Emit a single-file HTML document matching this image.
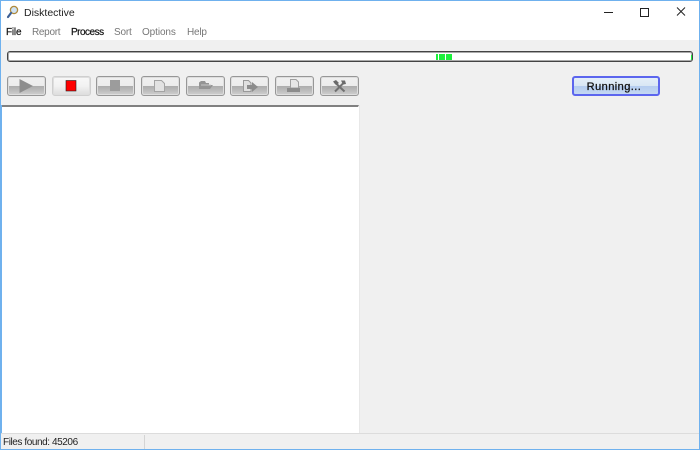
<!DOCTYPE html>
<html><head><meta charset="utf-8"><style>
html,body{margin:0;padding:0}
body{width:700px;height:450px;position:relative;overflow:hidden;background:#f0f0f0;font-family:"Liberation Sans",sans-serif;font-size:10px;color:#111}
.a{position:absolute}
.t{position:absolute;white-space:nowrap;line-height:12px;filter:blur(.25px)}
.b{position:absolute;top:76px;height:18px;width:37px;border:1px solid #979797;border-radius:3px;background:linear-gradient(#f0f0f0 0,#ececec 50%,#adadad 51%,#bcbcbc 75%,#d0d0d0 100%);box-shadow:0 0 0 1px #dedede inset;filter:blur(.3px)}
svg{position:absolute;left:0;top:0}
</style></head><body>
<div class="a" style="left:0;top:0;width:700px;height:40px;background:#fff"></div>
<div class="t" style="left:24px;top:7px;font-size:10.5px;color:#222">Disktective</div>
<div class="t" style="left:6px;top:27px;letter-spacing:-.2px;color:#111;-webkit-text-stroke:.2px #111">File</div>
<div class="t" style="left:32px;top:27px;letter-spacing:-.3px;color:#777">Report</div>
<div class="t" style="left:71px;top:27px;letter-spacing:-.5px;color:#111;-webkit-text-stroke:.2px #111">Process</div>
<div class="t" style="left:114px;top:27px;letter-spacing:-.2px;color:#777">Sort</div>
<div class="t" style="left:142px;top:27px;letter-spacing:-.1px;color:#777">Options</div>
<div class="t" style="left:187px;top:27px;letter-spacing:-.2px;color:#777">Help</div>

<div class="a" style="left:7px;top:51px;width:684px;height:9px;border:1px solid #444;border-radius:3px;background:#fff;box-shadow:0 0 0 1px #aaa inset"></div>
<div class="a" style="left:436px;top:54px;width:2px;height:6px;background:#1cf03c"></div>
<div class="a" style="left:439px;top:54px;width:6px;height:6px;background:#1cf03c"></div>
<div class="a" style="left:446px;top:54px;width:6px;height:6px;background:#1cf03c"></div>
<div class="a" style="left:691px;top:55px;width:1px;height:5px;background:#1cf03c"></div>

<div class="b" style="left:7px"></div>
<div class="b" style="left:52px;border-color:#cfcfcf;background:linear-gradient(#f8f8f8,#f2f2f2 50%,#dcdcdc)"></div>
<div class="b" style="left:96px"></div>
<div class="b" style="left:141px"></div>
<div class="b" style="left:186px"></div>
<div class="b" style="left:230px"></div>
<div class="b" style="left:275px"></div>
<div class="b" style="left:320px"></div>

<div class="a" style="left:1px;top:105px;width:357px;height:326px;background:#fff;border-top:2px solid #808080;border-right:1px solid #fff;border-bottom:1px solid #fff;box-shadow:1px 0 0 #e8e8e8"></div>

<div class="a" style="left:572px;top:76px;width:84px;height:16px;border:2px solid #5c66ee;border-radius:3px;background:linear-gradient(#e4eef8 0,#d8e6f4 50%,#b4cdf0 51%,#c4d8f2 100%);filter:blur(.25px)"></div>
<div class="t" style="left:574px;top:81px;width:80px;text-align:center;font-size:11px;letter-spacing:.45px;color:#111;-webkit-text-stroke:.3px #111">Running...</div>

<div class="a" style="left:0;top:433px;width:700px;height:1px;background:#dcdcdc"></div>
<div class="a" style="left:144px;top:435px;width:1px;height:14px;background:#d4d4d4"></div>
<div class="t" style="left:3px;top:437px;font-size:10px;letter-spacing:-.42px;color:#222">Files found: 45206</div>

<svg width="700" height="450" viewBox="0 0 700 450">
<rect x=".5" y=".5" width="699" height="449" fill="none" stroke="#6fb1ee"/>
<rect x="0" y="105" width="2" height="328" fill="#6fb1ee"/>
<!-- app icon -->
<circle cx="14" cy="10" r="3.6" fill="#cfe3f4" stroke="#b08a3c" stroke-width="1.3"/>
<path d="M11 13 L8 17" stroke="#3d5f95" stroke-width="2.2" stroke-linecap="round"/>
<!-- window controls -->
<path d="M604 12.500H613" stroke="#222" stroke-width="1"/>
<rect x="640.500" y="8.500" width="8" height="8" fill="none" stroke="#222"/>
<path d="M677 7.500L685 15.500M685 7.500L677 15.500" stroke="#222" stroke-width="1" fill="none"/>
<g style="filter:blur(.3px)">
<!-- play -->
<path d="M19.500 79L33 86L19.500 93Z" fill="#8e8e8e"/>
<!-- stop red -->
<rect x="66" y="80.500" width="10" height="10.500" fill="#f00" stroke="#222" stroke-width=".6"/>
<!-- stop grey -->
<rect x="110" y="80" width="10" height="11" fill="#9c9c9c"/>
<!-- doc -->
<path d="M154.500 80.500H161.500L164.500 83.500V91.500H154.500Z" fill="#e2e2e2" stroke="#a4a4a4"/>
<!-- folder -->
<path d="M199 89V82.500L201 81H205L206 83H209V85H213L210 89Z" fill="#949494"/>
<path d="M201 85H211" stroke="#c8c8c8"/>
<!-- export -->
<path d="M243.500 80.500H248.500L251 83V91.500H243.500Z" fill="#e0e0e0" stroke="#999"/>
<path d="M247 85H252V82L258 87L252 92V89H247Z" fill="#8c8c8c"/>
<!-- print -->
<path d="M290.500 79.500H296L298.500 82V88H290.500Z" fill="#e6e6e6" stroke="#a0a0a0"/>
<rect x="287" y="88" width="13" height="4" fill="#8c8c8c"/>
<!-- tools -->
<path d="M334.500 82L344.500 91.500M344.500 82L335 91.500" stroke="#707070" stroke-width="2" fill="none"/>
<path d="M333 81.500L336 80L339 83L336 85ZM341 80.500H345L346 84L343 84.500Z" fill="#6a6a6a"/>
</g>
</svg>
</body></html>
